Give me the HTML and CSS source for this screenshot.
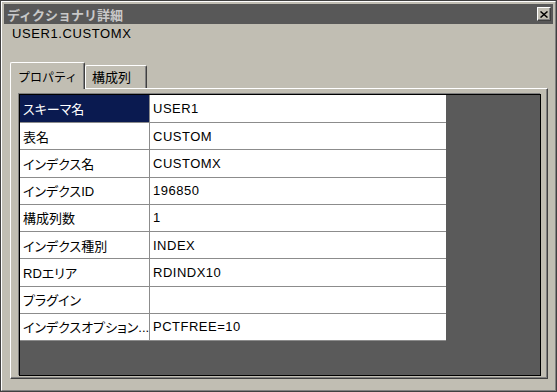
FILE: index.html
```html
<!DOCTYPE html>
<html lang="ja">
<head>
<meta charset="utf-8">
<title>ディクショナリ詳細</title>
<link rel="stylesheet" href="styles.css">
</head>
<body>
<div class="window">
  <div class="frame">
    <div class="titlebar">
      <span class="title">ディクショナリ詳細</span>
      <div class="close">
        <svg width="8" height="7" viewBox="0 0 8 7"><path d="M0.5 0.5 L7.5 6.5 M7.5 0.5 L0.5 6.5" stroke="#000" stroke-width="1.5" fill="none"/></svg>
      </div>
    </div>
    <div class="subtitle">USER1.CUSTOMX</div>
    <div class="tabs">
      <div class="tab active">プロパティ</div>
      <div class="tab">構成列</div>
    </div>
    <div class="panel">
      <div class="well">
        <div class="grid">
          <div class="cell label selected">スキーマ名</div><div class="cell value">USER1</div>
          <div class="cell label">表名</div><div class="cell value">CUSTOM</div>
          <div class="cell label">インデクス名</div><div class="cell value">CUSTOMX</div>
          <div class="cell label">インデクスID</div><div class="cell value">196850</div>
          <div class="cell label">構成列数</div><div class="cell value">1</div>
          <div class="cell label">インデクス種別</div><div class="cell value">INDEX</div>
          <div class="cell label">RDエリア</div><div class="cell value">RDINDX10</div>
          <div class="cell label">プラグイン</div><div class="cell value"></div>
          <div class="cell label">インデクスオプション...</div><div class="cell value">PCTFREE=10</div>
        </div>
      </div>
    </div>
  </div>
</div>
</body>
</html>
```

FILE: styles.css
```css
html, body {
  margin: 0;
  padding: 0;
}
body {
  width: 557px;
  height: 392px;
  overflow: hidden;
  background: #c1beb3;
  font-family: "Liberation Sans", "Noto Sans CJK JP", sans-serif;
}
.window {
  width: 557px;
  height: 392px;
  box-sizing: border-box;
  border: 1px solid #404040;
  background: #c1beb3;
}
.frame {
  height: 100%;
  box-sizing: border-box;
  border-top: 1px solid #ffffff;
  border-left: 1px solid #ffffff;
  border-right: 1px solid #808080;
  border-bottom: 1px solid #808080;
  padding: 2px;
  display: flex;
  flex-direction: column;
}
.titlebar {
  height: 20px;
  background: #585858;
  display: flex;
  align-items: center;
  justify-content: space-between;
  padding: 0 2px 0 3px;
}
.title {
  font-family: "Noto Sans CJK JP", sans-serif;
  font-size: 13px;
  font-weight: bold;
  color: #c8c8c8;
  line-height: 16px;
  margin-top: 2px;
}
.close {
  width: 14px;
  height: 14px;
  box-sizing: border-box;
  background: #c1beb3;
  border-top: 1px solid #ffffff;
  border-left: 1px solid #ffffff;
  border-right: 1px solid #404040;
  border-bottom: 1px solid #404040;
  box-shadow: inset -1px -1px 0 #808080;
  display: flex;
  align-items: center;
  justify-content: center;
}
.close svg {
  display: block;
}
.subtitle {
  margin-top: 2px;
  padding-left: 8px;
  font-size: 13px;
  letter-spacing: 0.6px;
  line-height: 16px;
  height: 16px;
  color: #000;
}
.tabs {
  margin: 20px 0 0 6px;
  height: 26px;
  display: flex;
  align-items: flex-start;
  position: relative;
  z-index: 1;
}
.tab {
  box-sizing: border-box;
  font-family: "Noto Sans CJK JP", sans-serif;
  font-size: 12px;
  line-height: 14px;
  color: #000;
  background: #c1beb3;
  border-top: 1px solid #ffffff;
  border-left: 1px solid #ffffff;
  border-right: 1px solid #404040;
  box-shadow: inset -1px 0 0 #808080;
  border-radius: 2px 2px 0 0;
  white-space: nowrap;
}
.tab.active {
  width: 75px;
  height: 27px;
  padding: 7px 0 0 7px;
}
.tab:not(.active) {
  width: 62px;
  height: 23px;
  margin-top: 3px;
  padding: 4px 0 0 6px;
  font-size: 13px;
}
.panel {
  flex: 1;
  margin: 0 5px 9px 6px;
  box-sizing: border-box;
  border-top: 1px solid #ffffff;
  border-left: 1px solid #ffffff;
  border-right: 1px solid #404040;
  border-bottom: 1px solid #404040;
  box-shadow: inset -1px -1px 0 #808080;
  padding: 5px 6px 2px 8px;
  display: flex;
}
.well {
  flex: 1;
  border: 1px solid #000;
  box-shadow: -1px -1px 0 #808080;
  background: #5a5a5a;
}
.grid {
  display: grid;
  width: 426px;
  grid-template-columns: 130px 296px;
  grid-template-rows: 28px repeat(8, 27.25px);
}
.cell {
  box-sizing: border-box;
  background: #ffffff;
  border-bottom: 1px solid #8c8c8c;
  padding-left: 3px;
  display: flex;
  align-items: center;
  white-space: nowrap;
  overflow: hidden;
  font-size: 13px;
  color: #000;
}
.value {
  letter-spacing: 0.5px;
}
.label {
  border-right: 1px solid #8c8c8c;
  font-feature-settings: "palt";
}
.label.selected {
  background: #0a1a50;
  color: #ffffff;
}
```
